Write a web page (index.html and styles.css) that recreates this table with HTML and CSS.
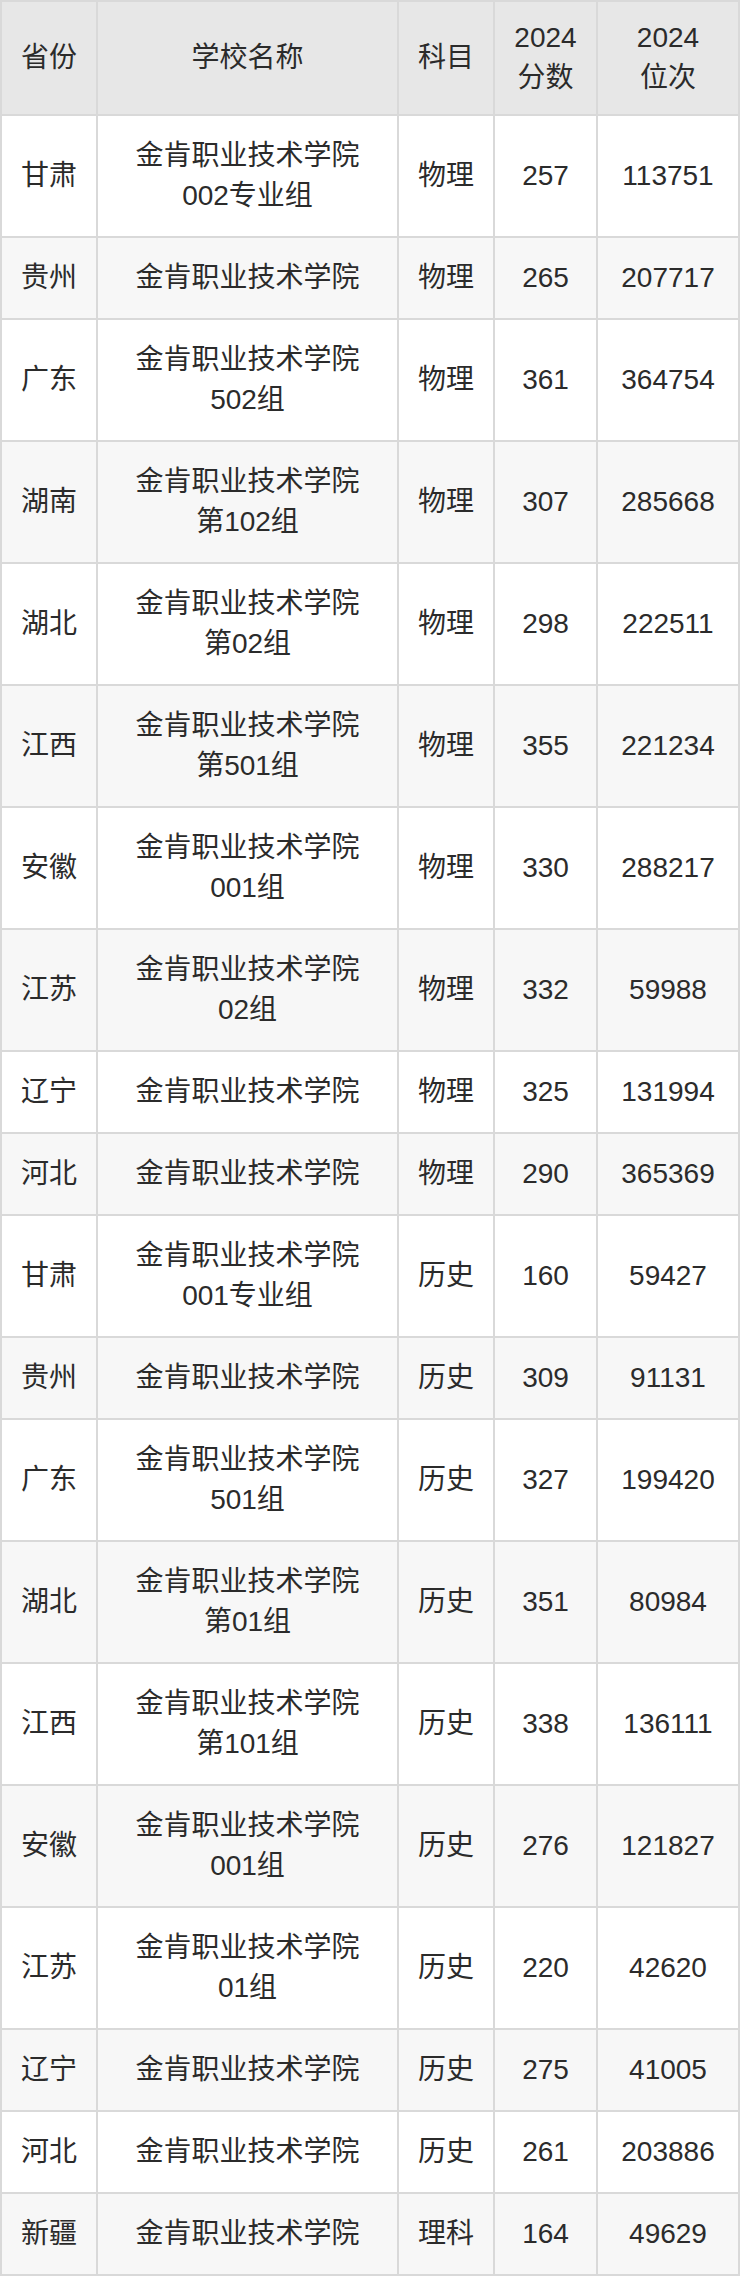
FILE: index.html
```html
<!DOCTYPE html>
<html lang="zh-CN">
<head>
<meta charset="utf-8">
<title>金肯职业技术学院 2024 分数线</title>
<link rel="stylesheet" href="styles.css">
</head>
<body>
<table class="score-table">
  <colgroup>
    <col class="c-prov">
    <col class="c-school">
    <col class="c-subj">
    <col class="c-score">
    <col class="c-rank">
  </colgroup>
  <thead>
    <tr><th>省份</th><th>学校名称</th><th>科目</th><th>2024<br>分数</th><th>2024<br>位次</th></tr>
  </thead>
  <tbody>
    <tr><td>甘肃</td><td>金肯职业技术学院<br>002专业组</td><td>物理</td><td>257</td><td>113751</td></tr>
    <tr><td>贵州</td><td>金肯职业技术学院</td><td>物理</td><td>265</td><td>207717</td></tr>
    <tr><td>广东</td><td>金肯职业技术学院<br>502组</td><td>物理</td><td>361</td><td>364754</td></tr>
    <tr><td>湖南</td><td>金肯职业技术学院<br>第102组</td><td>物理</td><td>307</td><td>285668</td></tr>
    <tr><td>湖北</td><td>金肯职业技术学院<br>第02组</td><td>物理</td><td>298</td><td>222511</td></tr>
    <tr><td>江西</td><td>金肯职业技术学院<br>第501组</td><td>物理</td><td>355</td><td>221234</td></tr>
    <tr><td>安徽</td><td>金肯职业技术学院<br>001组</td><td>物理</td><td>330</td><td>288217</td></tr>
    <tr><td>江苏</td><td>金肯职业技术学院<br>02组</td><td>物理</td><td>332</td><td>59988</td></tr>
    <tr><td>辽宁</td><td>金肯职业技术学院</td><td>物理</td><td>325</td><td>131994</td></tr>
    <tr><td>河北</td><td>金肯职业技术学院</td><td>物理</td><td>290</td><td>365369</td></tr>
    <tr><td>甘肃</td><td>金肯职业技术学院<br>001专业组</td><td>历史</td><td>160</td><td>59427</td></tr>
    <tr><td>贵州</td><td>金肯职业技术学院</td><td>历史</td><td>309</td><td>91131</td></tr>
    <tr><td>广东</td><td>金肯职业技术学院<br>501组</td><td>历史</td><td>327</td><td>199420</td></tr>
    <tr><td>湖北</td><td>金肯职业技术学院<br>第01组</td><td>历史</td><td>351</td><td>80984</td></tr>
    <tr><td>江西</td><td>金肯职业技术学院<br>第101组</td><td>历史</td><td>338</td><td>136111</td></tr>
    <tr><td>安徽</td><td>金肯职业技术学院<br>001组</td><td>历史</td><td>276</td><td>121827</td></tr>
    <tr><td>江苏</td><td>金肯职业技术学院<br>01组</td><td>历史</td><td>220</td><td>42620</td></tr>
    <tr><td>辽宁</td><td>金肯职业技术学院</td><td>历史</td><td>275</td><td>41005</td></tr>
    <tr><td>河北</td><td>金肯职业技术学院</td><td>历史</td><td>261</td><td>203886</td></tr>
    <tr><td>新疆</td><td>金肯职业技术学院</td><td>理科</td><td>164</td><td>49629</td></tr>
  </tbody>
</table>
</body>
</html>
```
FILE: styles.css
```css
html, body {
  margin: 0;
  padding: 0;
  background: #ffffff;
}

.score-table {
  width: 740px;
  table-layout: fixed;
  border-collapse: separate;
  border-spacing: 0;
  border-top: 2px solid #d9d9d9;
  border-left: 2px solid #d9d9d9;
  font-family: "Liberation Sans", "Noto Sans CJK SC", sans-serif;
  font-size: 28px;
  line-height: 40px;
  color: #2b2b2b;
}

.c-prov { width: 96px; }
.c-school { width: 301px; }
.c-subj { width: 96px; }
.c-score { width: 103px; }
.c-rank { width: 142px; }

.score-table th,
.score-table td {
  border-right: 2px solid #d9d9d9;
  border-bottom: 2px solid #d9d9d9;
  text-align: center;
  vertical-align: middle;
  padding: 20px 0;
  font-weight: normal;
  box-sizing: border-box;
}

.score-table th {
  background: #e7e7e7;
  padding: 16px 0;
}

.score-table tbody tr:nth-child(even) td {
  background: #f7f7f7;
}
```
